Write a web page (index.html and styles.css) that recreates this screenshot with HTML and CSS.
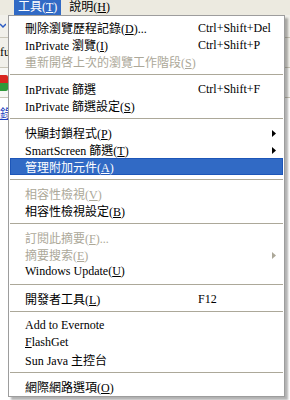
FILE: index.html
```html
<!DOCTYPE html>
<html lang="zh-Hant">
<head>
    <meta charset="UTF-8">
    <meta name="viewport" content="width=device-width, initial-scale=1.0">
    <title>工具</title>
    <link rel="stylesheet" href="styles.css">
</head>
<body>

<!-- Menu bar -->
<div class="menubar">
    <span class="menubar-item active">工具(<u>T</u>)</span>
    <span class="menubar-item">說明(<u>H</u>)</span>
</div>

<!-- Browser toolbars behind the menu -->
<div class="toolbar toolbar-nav">
    <svg class="chevron" width="6" height="8" viewBox="0 0 6 8"><path d="M0 2 L3 5 L6 2" fill="none" stroke="#2a5bc4" stroke-width="1.5"/></svg>
</div>
<div class="toolbar toolbar-text"><span class="toolbar-label">fu</span></div>
<div class="toolbar toolbar-icons">
    <svg class="addon-icon" width="8" height="20" viewBox="0 0 8 20">
        <path d="M0 2 H6 A2 2 0 0 1 8 4 V10 H0 Z" fill="#d8261f"/>
        <path d="M0 10 H8 V16 A2 2 0 0 1 6 18 H0 Z" fill="#2f9a3a"/>
    </svg>
</div>
<div class="page">
    <a class="page-link" href="#">錄</a>
</div>

<!-- Tools dropdown -->
<div class="dropdown">
    <div class="item"><span>刪除瀏覽歷程記錄(<u>D</u>)...</span><span class="key">Ctrl+Shift+Del</span></div>
    <div class="item"><span>InPrivate 瀏覽(<u>I</u>)</span><span class="key">Ctrl+Shift+P</span></div>
    <div class="item off"><span>重新開啓上次的瀏覽工作階段(<u>S</u>)</span></div>
    <div class="sep"></div>
    <div class="item"><span>InPrivate 篩選</span><span class="key">Ctrl+Shift+F</span></div>
    <div class="item"><span>InPrivate 篩選設定(<u>S</u>)</span></div>
    <div class="sep"></div>
    <div class="item"><span>快顯封鎖程式(<u>P</u>)</span><span class="key"></span><svg class="arrow" width="4" height="7" viewBox="0 0 4 7"><path d="M0 0 L4 3.5 L0 7 Z"/></svg></div>
    <div class="item"><span>SmartScreen 篩選(<u>T</u>)</span><span class="key"></span><svg class="arrow" width="4" height="7" viewBox="0 0 4 7"><path d="M0 0 L4 3.5 L0 7 Z"/></svg></div>
    <div class="item selected"><span>管理附加元件(<u>A</u>)</span></div>
    <div class="sep"></div>
    <div class="item off"><span>相容性檢視(<u>V</u>)</span></div>
    <div class="item"><span>相容性檢視設定(<u>B</u>)</span></div>
    <div class="sep"></div>
    <div class="item off"><span>訂閱此摘要(<u>F</u>)...</span></div>
    <div class="item off"><span>摘要搜索(<u>E</u>)</span><span class="key"></span><svg class="arrow" width="4" height="7" viewBox="0 0 4 7"><path d="M0 0 L4 3.5 L0 7 Z"/></svg></div>
    <div class="item"><span>Windows Update(<u>U</u>)</span></div>
    <div class="sep"></div>
    <div class="item"><span>開發者工具(<u>L</u>)</span><span class="key">F12</span></div>
    <div class="sep"></div>
    <div class="item"><span>Add to Evernote</span></div>
    <div class="item"><span><u>F</u>lashGet</span></div>
    <div class="item"><span>Sun Java 主控台</span></div>
    <div class="sep"></div>
    <div class="item"><span>網際網路選項(<u>O</u>)</span></div>
</div>

</body>
</html>
```

FILE: styles.css
```css
body {
    margin: 0;
    width: 290px;
    height: 400px;
    overflow: hidden;
    position: relative;
    background: #fff;
    font-family: "Liberation Serif", "Noto Sans CJK TC", serif;
    font-size: 12px;
    color: #000;
}
.menubar {
    display: flex;
    height: 15px;
    line-height: 15px;
    padding-left: 14px;
    background: #eceae0;
}
.menubar-item {
    padding: 0 4px;
    margin-right: 4px;
    white-space: nowrap;
}
.menubar-item.active {
    background: #316ac5;
    color: #fff;
}
.toolbar {
    background: #f1f0ea;
    border-bottom: 1px solid #c9c6b8;
}
.toolbar-nav {
    height: 22px;
    display: flex;
    align-items: center;
}
.toolbar-text {
    height: 29px;
    display: flex;
    align-items: center;
}
.toolbar-icons {
    height: 29px;
    display: flex;
    align-items: center;
    background: #f7f7f4;
}
.page {
    padding-top: 6px;
}
.page-link {
    color: #1a3fc0;
}

/* dropdown */
.dropdown {
    position: absolute;
    left: 8px;
    top: 15px;
    width: 277px;
    box-sizing: border-box;
    border: 1px solid #9d9d9d;
    padding: 3px 1px 1px;
    background: #fff;
    box-shadow: 3px 3px 2px rgba(0, 0, 0, 0.3);
}
.item {
    display: grid;
    grid-template-columns: 173px 1fr 4px;
    align-items: center;
    height: 17px;
    padding: 0 7px 0 15px;
    white-space: nowrap;
}
.item .key {
    overflow: hidden;
}
.item.off {
    color: #aca899;
}
.item.selected {
    background: #316ac5;
    color: #fff;
    box-shadow: inset 0 0 0 1px #1d56b8;
}
.arrow {
    fill: currentColor;
}
.sep {
    height: 1px;
    margin: 4px 0 5px;
    background: #aca899;
}
```
